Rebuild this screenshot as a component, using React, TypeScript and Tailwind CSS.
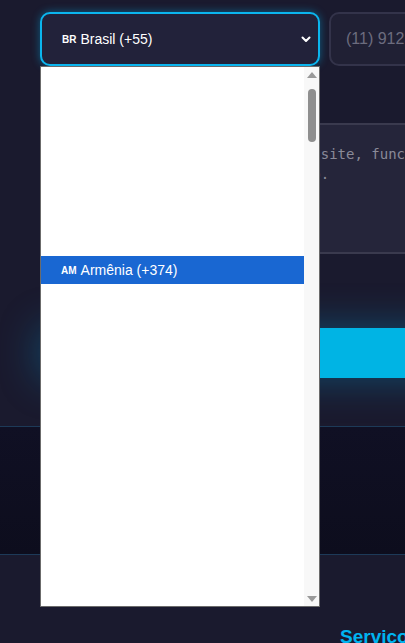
import React from "react";

const sans = { fontFamily: '"Liberation Sans", Arial, sans-serif' };

const CountryDropdown = () => (
  <div className="absolute left-[40px] top-[66px] w-[280px] h-[541px] bg-white border border-[#6b6b6b] flex" style={sans}>
    <div className="flex-1 relative">
      <div className="absolute left-0 right-0 top-[189px] h-[28px] bg-[#1967d2] flex items-center pl-[20px] text-white text-[14px]">
        <span className="text-[10px] font-bold mr-[4px] mt-[1px]">AM</span>
        Armênia (+374)
      </div>
    </div>
    <div className="w-[15px] bg-[#f8f8f8] flex flex-col items-center">
      <div className="mt-[5px] w-0 h-0 border-l-[5px] border-r-[5px] border-b-[6px] border-l-transparent border-r-transparent border-b-[#9a9a9a]" />
      <div className="mt-[11px] w-[8px] h-[53px] rounded-full bg-[#8f8f8f]" />
      <div className="flex-1" />
      <div className="mb-[4px] w-0 h-0 border-l-[5px] border-r-[5px] border-t-[6px] border-l-transparent border-r-transparent border-t-[#9a9a9a]" />
    </div>
  </div>
);

export default function App() {
  return (
    <div className="relative w-[405px] h-[643px] overflow-hidden bg-[#1a1a2e]" style={sans}>
      <div className="pl-[40px] pt-[12px]">
        <div className="flex gap-[9px] w-[600px]">
          <div className="w-[280px] h-[54px] shrink-0 rounded-[10px] border-2 border-[#0bb5ee] bg-[#22223a] shadow-[0_0_8px_rgba(0,180,240,0.45)] flex items-center pl-[20px] pr-[6px] text-white text-[14px]">
            <span className="text-[10px] font-bold mr-[4px] mt-[1px]">BR</span>
            <span>Brasil (+55)</span>
            <svg className="ml-auto" width="12" height="12" viewBox="0 0 12 12">
              <path d="M2.5 4.5 L6 8 L9.5 4.5" fill="none" stroke="white" strokeWidth="2" strokeLinecap="round" strokeLinejoin="round" />
            </svg>
          </div>
          <div className="w-[220px] h-[54px] shrink-0 rounded-[10px] border-2 border-[#33334a] bg-[#202034] flex items-center pl-[15px] text-[16px] text-[#6c6c7e] whitespace-nowrap">
            (11) 91234-5678
          </div>
        </div>

        <div className="mt-[57px] w-[600px] h-[131px] bg-[#25253a] border-y-2 border-[#3a3a4e] pt-[19px] pl-[11px] text-[14px] leading-[20px] text-[#8a8a98] whitespace-pre" style={{ fontFamily: '"DejaVu Sans Mono", monospace' }}>
          <div>Descreva o projeto: objetivo do site, funcionalidades</div>
          <div>desejadas, prazos e investimento.</div>
        </div>

        <div className="mt-[74px] w-[600px] h-[50px] bg-[#00b4e4] shadow-[0_0_40px_rgba(0,170,230,0.35)]" />
      </div>

      <div className="mt-[48px] h-[129px] border-t border-b border-[#1d3a58] bg-gradient-to-b from-[#101024] to-[#0d0d1d]" />

      <div className="flex pt-[68px] pl-[340px]">
        <span className="text-[19px] font-bold text-[#00b4f0] whitespace-nowrap">Serviços</span>
      </div>

      <CountryDropdown />
    </div>
  );
}
